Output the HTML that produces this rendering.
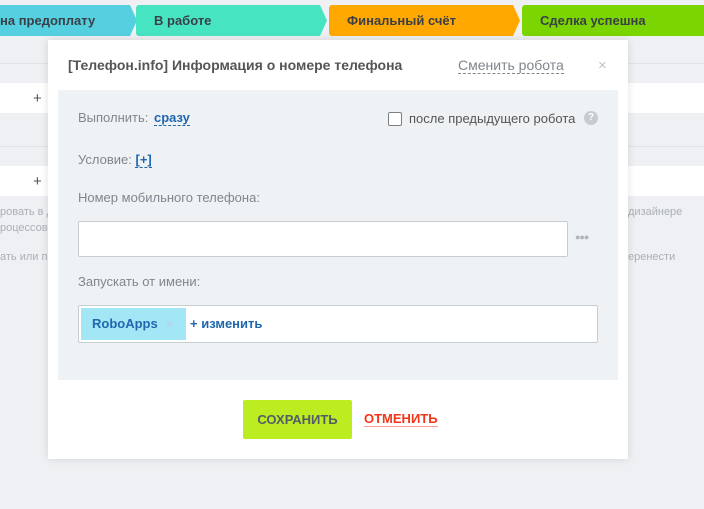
<!DOCTYPE html>
<html><head><meta charset="utf-8"><style>
*{margin:0;padding:0;box-sizing:border-box}
body{width:704px;height:509px;overflow:hidden;background:#eef0f3;font-family:"Liberation Sans","DejaVu Sans",sans-serif;position:relative}
.st{position:absolute;top:5px;height:31px;color:#3a3f46;font-size:13px;font-weight:bold;line-height:31px;padding-left:18px;border-radius:3px 0 0 3px}
.st svg{position:absolute;right:-7px;top:0}
.row{position:absolute;left:0;width:704px;background:#fff;height:30px}
.line{position:absolute;left:0;width:704px;height:1px;background:#dfe2e6}
.g{position:absolute;color:#aab0b6;font-size:11px}
.modal{position:absolute;left:48px;top:40px;width:580px;height:419px;background:#fff;box-shadow:0 0 8px rgba(0,0,0,.12)}
.panel{position:absolute;left:10px;top:50px;width:560px;height:290px;background:#eef2f4}
.lbl{position:absolute;color:#80868e;font-size:13px}
.lnk{color:#2067b0;font-weight:bold;border-bottom:1px dashed #2067b0}
</style></head><body>
<div class="line" style="top:63px"></div>
<div class="row" style="top:83px"></div>
<div class="line" style="top:146px"></div>
<div class="row" style="top:166px"></div>
<div class="g" style="left:0;top:206px">ровать в д</div>
<div class="g" style="left:0;top:222px">роцессов</div>
<div class="g" style="left:0;top:251px">ать или п</div>
<div class="g" style="left:628px;top:206px">дизайнере</div>
<div class="g" style="left:628px;top:251px">еренести</div>
<div style="position:absolute;left:33px;top:90px;font-size:15px;color:#555">+</div>
<div style="position:absolute;left:33px;top:173px;font-size:15px;color:#555">+</div>

<div class="st" style="left:-10px;width:140px;background:#55d0e0;padding-left:10px">на предоплату<svg width="8" height="31"><path d="M0 0 L1 0 L8 15.5 L1 31 L0 31Z" fill="#55d0e0"/></svg></div>
<div class="st" style="left:136px;width:184px;background:#47e4c2">В работе<svg width="8" height="31"><path d="M0 0 L1 0 L8 15.5 L1 31 L0 31Z" fill="#47e4c2"/></svg></div>
<div class="st" style="left:329px;width:184px;background:#ffa900">Финальный счёт<svg width="8" height="31"><path d="M0 0 L1 0 L8 15.5 L1 31 L0 31Z" fill="#ffa900"/></svg></div>
<div class="st" style="left:522px;width:190px;background:#7bd500">Сделка успешна</div>

<div class="modal">
<div style="position:absolute;left:20px;top:17px;font-size:14px;font-weight:bold;color:#555">[Телефон.info] Информация о номере телефона</div>
<div style="position:absolute;left:410px;top:17px;font-size:14px;color:#80868e;border-bottom:1px dashed #80868e;line-height:16px">Сменить робота</div>
<div style="position:absolute;left:550px;top:17px;font-size:15px;color:#c0c4c8">×</div>
<div class="panel">
<div class="lbl" style="left:20px;top:20px">Выполнить: <span class="lnk" style="margin-left:2px">сразу</span></div>
<div style="position:absolute;left:330px;top:22px;width:14px;height:14px;border:1.5px solid #7a8088;border-radius:2px;background:#fff"></div>
<div class="lbl" style="left:351px;top:21px;color:#555;font-size:13px">после предыдущего робота</div>
<div style="position:absolute;left:526px;top:21px;width:14px;height:14px;border-radius:50%;background:#c8ccd0;color:#fff;font-size:10px;text-align:center;line-height:14px;font-weight:bold">?</div>
<div class="lbl" style="left:20px;top:62px">Условие: <span class="lnk">[+]</span></div>
<div class="lbl" style="left:20px;top:100px">Номер мобильного телефона:</div>
<div style="position:absolute;left:20px;top:131px;width:490px;height:36px;background:#fff;border:1px solid #c6cdd3;border-radius:2px"></div>
<div style="position:absolute;left:517px;top:142px;color:#b0b5ba;font-size:9px;letter-spacing:-1px">●●●</div>
<div class="lbl" style="left:20px;top:184px">Запускать от имени:</div>
<div style="position:absolute;left:20px;top:215px;width:520px;height:38px;background:#fff;border:1px solid #c6cdd3;border-radius:2px">
<div style="position:absolute;left:2px;top:2px;width:105px;height:32px;background:#a3e7f6;color:#2067b0;font-weight:bold;font-size:13px;line-height:32px;padding-left:11px">RoboApps<span style="position:absolute;left:85px;color:#bcd;font-size:12px;font-weight:normal">×</span></div>
<div style="position:absolute;left:111px;top:10px;color:#2067b0;font-weight:bold;font-size:13px">+ изменить</div>
</div>
</div>
<div style="position:absolute;left:195px;top:360px;width:109px;height:39px;background:#bbed21;border-radius:2px;color:#535c69;font-size:13px;font-weight:bold;text-align:center;line-height:39px">СОХРАНИТЬ</div>
<div style="position:absolute;left:316px;top:371px;color:#f1361a;font-size:13px;font-weight:bold;border-bottom:1px solid #f7a08f;line-height:15px">ОТМЕНИТЬ</div>
</div>
</body></html>
